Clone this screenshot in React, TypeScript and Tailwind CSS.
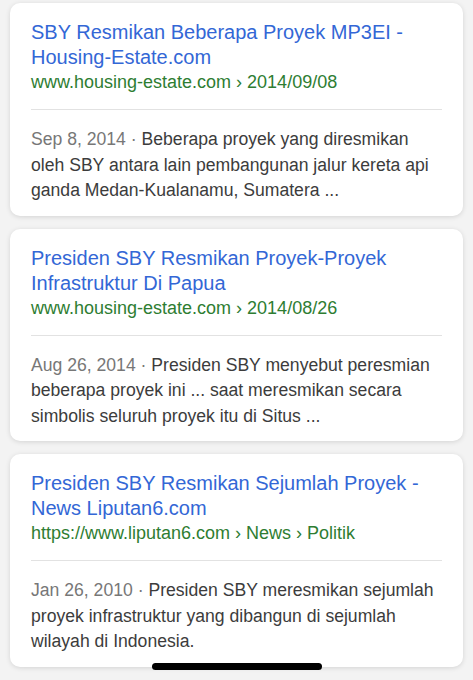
export default function App() {
  const results = [
    {
      title: 'SBY Resmikan Beberapa Proyek MP3EI - Housing-Estate.com',
      url: 'www.housing-estate.com › 2014/09/08',
      date: 'Sep 8, 2014',
      snippet: 'Beberapa proyek yang diresmikan oleh SBY antara lain pembangunan jalur kereta api ganda Medan-Kualanamu, Sumatera ...',
    },
    {
      title: 'Presiden SBY Resmikan Proyek-Proyek Infrastruktur Di Papua',
      url: 'www.housing-estate.com › 2014/08/26',
      date: 'Aug 26, 2014',
      snippet: 'Presiden SBY menyebut peresmian beberapa proyek ini ... saat meresmikan secara simbolis seluruh proyek itu di Situs ...',
    },
    {
      title: 'Presiden SBY Resmikan Sejumlah Proyek - News Liputan6.com',
      url: 'https://www.liputan6.com › News › Politik',
      date: 'Jan 26, 2010',
      snippet: 'Presiden SBY meresmikan sejumlah proyek infrastruktur yang dibangun di sejumlah wilayah di Indonesia.',
    },
  ];

  return (
    <div
      className="relative h-[680px] w-[473px] overflow-hidden bg-[#f3f3f3]"
      style={{ fontFamily: '"Liberation Sans", Arial, sans-serif' }}
    >
      <div className="flex flex-col gap-[13px] px-[10px] pt-[3px]">
        {results.map((r, i) => (
          <div
            key={i}
            className="rounded-[10px] bg-white px-[21px] pt-[17px] pb-[12px] shadow-[0_1px_5px_rgba(0,0,0,0.13)]"
          >
            <div className="text-[20px] leading-[25px] text-[#3367d6]">{r.title}</div>
            <div className="text-[18px] leading-[25px] text-[#2e7d32]">{r.url}</div>
            <div className="mt-[14px] h-px bg-[#e2e2e2]" />
            <div className="mt-[17px] pr-[6px] text-[17.6px] leading-[25.5px] text-[#3c3c3c]">
              <span className="text-[#777]">{r.date} · </span>
              {r.snippet}
            </div>
          </div>
        ))}
      </div>
      <div className="absolute left-[152px] top-[663px] h-[7px] w-[170px] rounded-full bg-black" />
    </div>
  );
}
